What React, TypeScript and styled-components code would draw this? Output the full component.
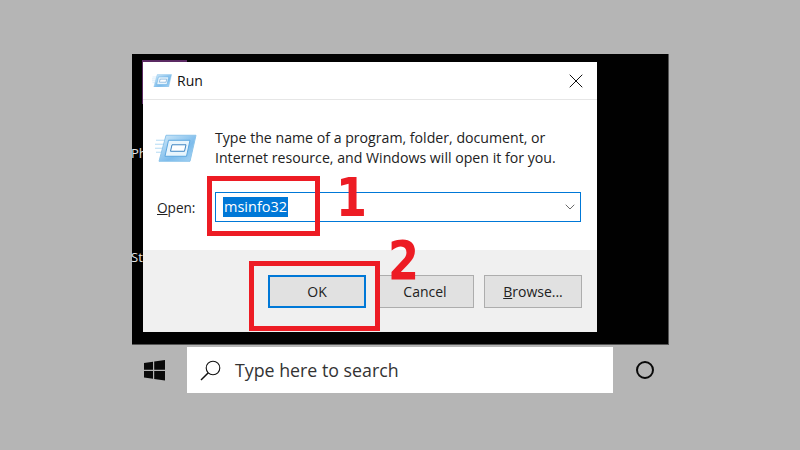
import React from "react";
import styled, { createGlobalStyle } from "styled-components";
import { ChevronDown, X } from "lucide-react";

const GlobalStyle = createGlobalStyle`
  html, body {
    margin: 0;
    padding: 0;
    background: #b5b5b5;
  }
  body {
    font-family: "Open Sans", "Noto Sans", sans-serif;
    color: #1a1a1a;
  }
`;

const App = () => {
  return (
    <Page>
      <GlobalStyle />
      <Screen>
        <DesktopLabel $top={144}>Ph</DesktopLabel>
        <DesktopLabel $top={248}>St</DesktopLabel>
        <PurpleTop />
        <PurpleSide />
        <Dialog>
          <TitleBar>
            <RunIcon size={20} />
            <Title>Run</Title>
            <CloseButton>
              <X size={24} strokeWidth={1} />
            </CloseButton>
          </TitleBar>
          <Body>
            <MessageRow>
              <RunIcon size={42} />
              <Message>
                Type the name of a program, folder, document, or
                <br />
                Internet resource, and Windows will open it for you.
              </Message>
            </MessageRow>
            <OpenRow>
              <OpenLabel>
                <u>O</u>pen:
              </OpenLabel>
              <Combo>
                <Selected>msinfo32</Selected>
                <ChevronDown size={16} strokeWidth={1.2} color="#444" />
              </Combo>
            </OpenRow>
          </Body>
          <Footer>
            <DialogButton $primary>OK</DialogButton>
            <DialogButton>Cancel</DialogButton>
            <DialogButton>
              <u>B</u>rowse...
            </DialogButton>
          </Footer>
        </Dialog>
        <Highlight $left={75} $top={122} $width={113} $height={60} />
        <Highlight $left={117} $top={207} $width={131} $height={70} />
        <StepNumber $left={204} $top={124}>1</StepNumber>
        <StepNumber $left={256} $top={187}>2</StepNumber>
      </Screen>
      <Taskbar>
        <StartCell>
          <svg width="21" height="21" viewBox="0 0 21 21" fill="#0a0a0a">
            <polygon points="0,3 9,1.7 9,9.7 0,9.7" />
            <polygon points="10.2,1.5 21,0 21,9.7 10.2,9.7" />
            <polygon points="0,10.9 9,10.9 9,18.8 0,17.6" />
            <polygon points="10.2,10.9 21,10.9 21,20.6 10.2,19.1" />
          </svg>
        </StartCell>
        <SearchBox>
          <svg width="21" height="21" viewBox="0 0 21 21" fill="none" stroke="#111">
            <circle cx="13" cy="8" r="6.8" strokeWidth="1.1" />
            <line x1="8.3" y1="12.8" x2="1" y2="20" strokeWidth="1.5" />
          </svg>
          <SearchText>Type here to search</SearchText>
        </SearchBox>
        <CortanaCell>
          <CortanaRing />
        </CortanaCell>
      </Taskbar>
    </Page>
  );
};

const RunIcon = ({ size }: { size: number }) => {
  const id = `run-glass-${size}`;
  return (
    <svg width={size} height={size * 0.68} viewBox="0 0 42 28" style={{ flexShrink: 0 }}>
      <defs>
        <linearGradient id={id} x1="0" y1="0" x2="1" y2="1">
          <stop offset="0" stopColor="#d5ecfa" />
          <stop offset="0.6" stopColor="#7dbcec" />
          <stop offset="1" stopColor="#a9d5f4" />
        </linearGradient>
      </defs>
      <g stroke="#bfe0f6" strokeWidth="1.2">
        <line x1="1" y1="6" x2="10" y2="6" />
        <line x1="0" y1="10" x2="9" y2="10" />
        <line x1="0" y1="14" x2="8" y2="14" />
        <line x1="1" y1="18" x2="7" y2="18" />
      </g>
      <polygon points="11,1 41,1 35,27 4,27" fill={`url(#${id})`} stroke="#8cc4ea" />
      <polygon points="13.5,6 35,6 31.5,22 10,22" fill="#e8f5fd" stroke="#5da7df" />
      <polygon points="17,10.5 31,10.5 29.5,17 15.5,17" fill="#fdfeff" stroke="#3f86c4" />
    </svg>
  );
};

const Page = styled.div`
  width: 800px;
  height: 450px;
  overflow: hidden;
  padding: 54px 0 0 132px;
  box-sizing: border-box;
`;

const Screen = styled.div`
  position: relative;
  width: 537px;
  height: 291px;
  padding: 8px 71px 13px 11px;
  box-sizing: border-box;
  background: #010101;
  border-right: 1px solid #555;
  border-bottom: 1px solid #555;
`;

const DesktopLabel = styled.span<{ $top: number }>`
  position: absolute;
  left: -1px;
  top: ${(p) => p.$top - 54}px;
  font-size: 13px;
  line-height: 18px;
  color: #e4e4e4;
`;

const PurpleTop = styled.div`
  position: absolute;
  left: 10px;
  top: 6px;
  width: 45px;
  height: 2px;
  background: #5b2a63;
`;

const PurpleSide = styled.div`
  position: absolute;
  left: 10px;
  top: 6px;
  width: 1px;
  height: 44px;
  background: #5b2a63;
`;

const Dialog = styled.div`
  position: relative;
  display: flex;
  flex-direction: column;
  height: 270px;
  background: #fff;
`;

const TitleBar = styled.div`
  display: flex;
  align-items: center;
  gap: 5px;
  height: 37px;
  padding: 0 9px 0 9px;
  border-bottom: 1px solid #e6e6e6;
`;

const Title = styled.span`
  flex: 1;
  font-size: 14px;
  color: #111;
`;

const CloseButton = styled.span`
  display: flex;
  color: #111;
`;

const Body = styled.div`
  flex: 1;
  display: flex;
  flex-direction: column;
  padding: 28px 16px 0 12px;
`;

const MessageRow = styled.div`
  display: flex;
  align-items: center;
  gap: 18px;
`;

const Message = styled.p`
  margin: 0;
  font-size: 14.15px;
  line-height: 20px;
  color: #222;
`;

const OpenRow = styled.div`
  display: flex;
  align-items: center;
  margin-top: 24px;
`;

const OpenLabel = styled.span`
  width: 58px;
  padding-left: 2px;
  font-size: 13.6px;
  color: #222;
`;

const Combo = styled.div`
  flex: 1;
  display: flex;
  align-items: center;
  justify-content: space-between;
  height: 30px;
  padding: 0 2px 0 7px;
  box-sizing: border-box;
  border: 1px solid #0078d7;
`;

const Selected = styled.span`
  font-size: 14.5px;
  line-height: 20px;
  padding: 0 1px;
  color: #fff;
  background: #0078d7;
`;

const Footer = styled.div`
  display: flex;
  justify-content: flex-end;
  gap: 10px;
  height: 82px;
  padding: 25px 15px 0 0;
  box-sizing: border-box;
  background: #f0f0f0;
`;

const DialogButton = styled.div<{ $primary?: boolean }>`
  display: flex;
  align-items: center;
  justify-content: center;
  width: 98px;
  height: 33px;
  box-sizing: border-box;
  font-size: 14px;
  color: #222;
  background: #e1e1e1;
  border: ${(p) => (p.$primary ? "2px solid #0078d7" : "1px solid #adadad")};
`;

const Highlight = styled.div<{ $left: number; $top: number; $width: number; $height: number }>`
  position: absolute;
  left: ${(p) => p.$left}px;
  top: ${(p) => p.$top}px;
  width: ${(p) => p.$width}px;
  height: ${(p) => p.$height}px;
  box-sizing: border-box;
  border: 5px solid #ed1c24;
`;

const StepNumber = styled.span<{ $left: number; $top: number }>`
  position: absolute;
  left: ${(p) => p.$left}px;
  top: ${(p) => p.$top}px;
  font-family: "DejaVu Sans", sans-serif;
  font-size: 53px;
  line-height: 40px;
  font-weight: 700;
  color: #ed1c24;
  transform: scaleX(0.84);
  transform-origin: left center;
`;

const Taskbar = styled.div`
  display: flex;
  align-items: center;
  height: 46px;
  margin-top: 2px;
`;

const StartCell = styled.div`
  display: flex;
  align-items: center;
  justify-content: flex-start;
  width: 55px;
  padding-left: 12px;
  box-sizing: border-box;
`;

const SearchBox = styled.div`
  display: flex;
  align-items: center;
  gap: 14px;
  width: 426px;
  height: 46px;
  padding-left: 13px;
  box-sizing: border-box;
  background: #fff;
`;

const SearchText = styled.span`
  font-size: 17.8px;
  color: #333;
`;

const CortanaCell = styled.div`
  display: flex;
  justify-content: center;
  width: 64px;
`;

const CortanaRing = styled.div`
  width: 18px;
  height: 18px;
  box-sizing: border-box;
  border: 2px solid #0a0a0a;
  border-radius: 50%;
`;

export default App;
